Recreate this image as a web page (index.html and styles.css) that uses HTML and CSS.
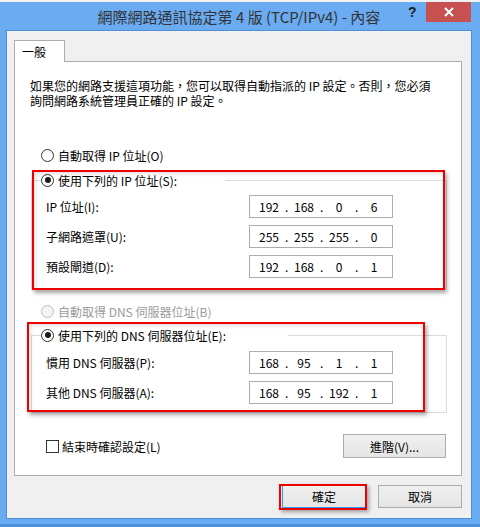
FILE: index.html
```html
<!DOCTYPE html>
<html lang="zh-Hant">
<head>
    <meta charset="UTF-8">
    <meta name="viewport" content="width=device-width, initial-scale=1.0">
    <title>網際網路通訊協定第 4 版 (TCP/IPv4) - 內容</title>
    <link rel="stylesheet" href="styles.css">
</head>
<body>

    <div class="window">
        <div class="titlebar">網際網路通訊協定第 4 版 (TCP/IPv4) - 內容</div>
        <span class="help">?</span>
        <div class="close">
            <svg width="10" height="10" viewBox="0 0 10 10">
                <path d="M1 1 L9 9 M9 1 L1 9" stroke="#fff" stroke-width="2" fill="none"/>
            </svg>
        </div>

        <div class="client">
            <div class="tab">一般</div>
            <div class="panel">
                <p class="desc">如果您的網路支援這項功能，您可以取得自動指派的 IP 設定。否則，您必須<br>詢問網路系統管理員正確的 IP 設定。</p>

                <div class="radio-row auto-ip">
                    <span class="radio"></span>
                    <span>自動取得 IP 位址(O)</span>
                </div>

                <fieldset class="group group-ip">
                    <legend class="radio-row legend-ip">
                        <span class="radio checked"></span>
                        <span>使用下列的 IP 位址(S):</span>
                    </legend>
                    <div class="fields">
                        <span class="label">IP 位址(I):</span>
                        <div class="ipbox"><span>192</span><i>.</i><span>168</span><i>.</i><span>0</span><i>.</i><span>6</span></div>
                        <span class="label">子網路遮罩(U):</span>
                        <div class="ipbox"><span>255</span><i>.</i><span>255</span><i>.</i><span>255</span><i>.</i><span>0</span></div>
                        <span class="label">預設閘道(D):</span>
                        <div class="ipbox"><span>192</span><i>.</i><span>168</span><i>.</i><span>0</span><i>.</i><span>1</span></div>
                    </div>
                </fieldset>

                <div class="radio-row auto-dns disabled">
                    <span class="radio"></span>
                    <span>自動取得 DNS 伺服器位址(B)</span>
                </div>

                <fieldset class="group group-dns">
                    <legend class="radio-row legend-dns">
                        <span class="radio checked"></span>
                        <span>使用下列的 DNS 伺服器位址(E):</span>
                    </legend>
                    <div class="fields">
                        <span class="label">慣用 DNS 伺服器(P):</span>
                        <div class="ipbox"><span>168</span><i>.</i><span>95</span><i>.</i><span>1</span><i>.</i><span>1</span></div>
                        <span class="label">其他 DNS 伺服器(A):</span>
                        <div class="ipbox"><span>168</span><i>.</i><span>95</span><i>.</i><span>192</span><i>.</i><span>1</span></div>
                    </div>
                </fieldset>

                <div class="bottom-row">
                    <label class="check-row">
                        <span class="checkbox"></span>
                        <span>結束時確認設定(L)</span>
                    </label>
                    <button class="btn btn-adv">進階(V)...</button>
                </div>

                <div class="mark mark-ip"></div>
                <div class="mark mark-dns"></div>
            </div>

            <div class="actions">
                <button class="btn btn-ok">確定</button>
                <button class="btn">取消</button>
            </div>
        </div>
    </div>

</body>
</html>
```

FILE: styles.css
```css
* {
    box-sizing: border-box;
}
body {
    margin: 0;
    background: #f2f2f2;
    font-family: "Noto Sans CJK TC", "Noto Sans", sans-serif;
    font-size: 12px;
    color: #000;
}
.window {
    position: relative;
    margin-top: 2px;
    width: 480px;
    height: 525px;
    padding: 0 8px 0 6px;
    background: #6aabf2;
    border-bottom: 3px solid #4f92dc;
}
.titlebar {
    height: 28px;
    display: flex;
    align-items: center;
    justify-content: center;
    font-size: 15px;
    color: #333;
}
.help {
    position: absolute;
    left: 408px;
    top: 2px;
    font-family: "Liberation Sans", sans-serif;
    font-weight: bold;
    font-size: 14px;
    color: #1e1e1e;
}
.close {
    position: absolute;
    left: 426px;
    top: 0;
    width: 45px;
    height: 20px;
    background: #c75050;
    display: flex;
    align-items: center;
    justify-content: center;
}
.client {
    height: 489px;
    padding: 9px 9px 0 7px;
    background: #f0f0f0;
    border: 1px solid #4f8fd8;
}
.tab {
    position: relative;
    z-index: 1;
    width: 51px;
    height: 22px;
    margin-bottom: -1px;
    padding-left: 7px;
    line-height: 21px;
    background: #fff;
    border: 1px solid #acacac;
    border-bottom: none;
}
.panel {
    position: relative;
    height: 415px;
    background: #fff;
    border: 1px solid #acacac;
}
.desc {
    margin: 16px 0 0 15px;
    line-height: 15px;
    white-space: nowrap;
}
.radio-row {
    display: flex;
    align-items: center;
    gap: 4px;
    height: 16px;
}
.radio {
    width: 13px;
    height: 13px;
    border: 1px solid #333;
    border-radius: 50%;
    background: #fdfdfd;
    display: flex;
    align-items: center;
    justify-content: center;
}
.radio.checked::after {
    content: "";
    width: 6px;
    height: 6px;
    border-radius: 50%;
    background: #1a1a1a;
}
.auto-ip {
    margin: 39px 0 0 26px;
}
.disabled {
    color: #9b9b9b;
}
.disabled .radio {
    border-color: #bcbcbc;
    background: #f4f4f4;
}
.auto-dns {
    margin: 13px 0 0 26px;
}
.group {
    margin: 9px 14px 0 16px;
    padding: 7px 0 11px 0;
    border: 1px solid #dcdcdc;
    min-width: 0;
}
.group-dns {
    margin-top: 8px;
    padding: 8px 0 8px 0;
}
.group legend {
    padding: 0;
    margin-left: 9px;
}
.legend-ip {
    width: 184px;
}
.legend-dns {
    width: 247px;
}
.fields {
    display: grid;
    grid-template-columns: 203px 144px;
    grid-auto-rows: 23px;
    row-gap: 7px;
    align-items: center;
    margin-left: 14px;
}
.ipbox {
    height: 23px;
    display: flex;
    align-items: center;
    padding-left: 3px;
    background: #fff;
    border: 1px solid #abadb3;
}
.ipbox span {
    width: 32px;
    text-align: center;
}
.ipbox i {
    font-style: normal;
    width: 3px;
    text-align: center;
}
.bottom-row {
    display: flex;
    align-items: center;
    justify-content: space-between;
    margin: 21px 15px 0 31px;
}
.check-row {
    display: flex;
    align-items: center;
    gap: 3px;
}
.checkbox {
    width: 13px;
    height: 13px;
    background: #fff;
    border: 1px solid #333;
}
.btn {
    font-family: inherit;
    font-size: 12px;
    color: #000;
    height: 23px;
    width: 84px;
    padding: 0;
    background: linear-gradient(#f0f0f0, #e5e5e5);
    border: 1px solid #acacac;
    border-radius: 0;
}
.btn-adv {
    width: 103px;
    height: 24px;
}
.btn-ok {
    position: relative;
    border-color: #3399ff;
}
.btn-ok::after {
    content: "";
    position: absolute;
    left: -4px;
    top: -2px;
    right: -2px;
    bottom: -3px;
    border: 2px solid #ee0000;
    box-shadow: 2px 2px 4px rgba(0, 0, 0, 0.35);
}
.actions {
    display: flex;
    justify-content: flex-end;
    gap: 12px;
    margin-top: 9px;
}
.mark {
    position: absolute;
    border: 2px solid #ee0000;
    box-shadow: 2px 3px 4px rgba(0, 0, 0, 0.35), inset 2px 2px 4px rgba(0, 0, 0, 0.12);
}
.mark-ip {
    left: 17px;
    top: 108px;
    width: 413px;
    height: 120px;
}
.mark-dns {
    left: 12px;
    top: 260px;
    width: 398px;
    height: 90px;
}
```
